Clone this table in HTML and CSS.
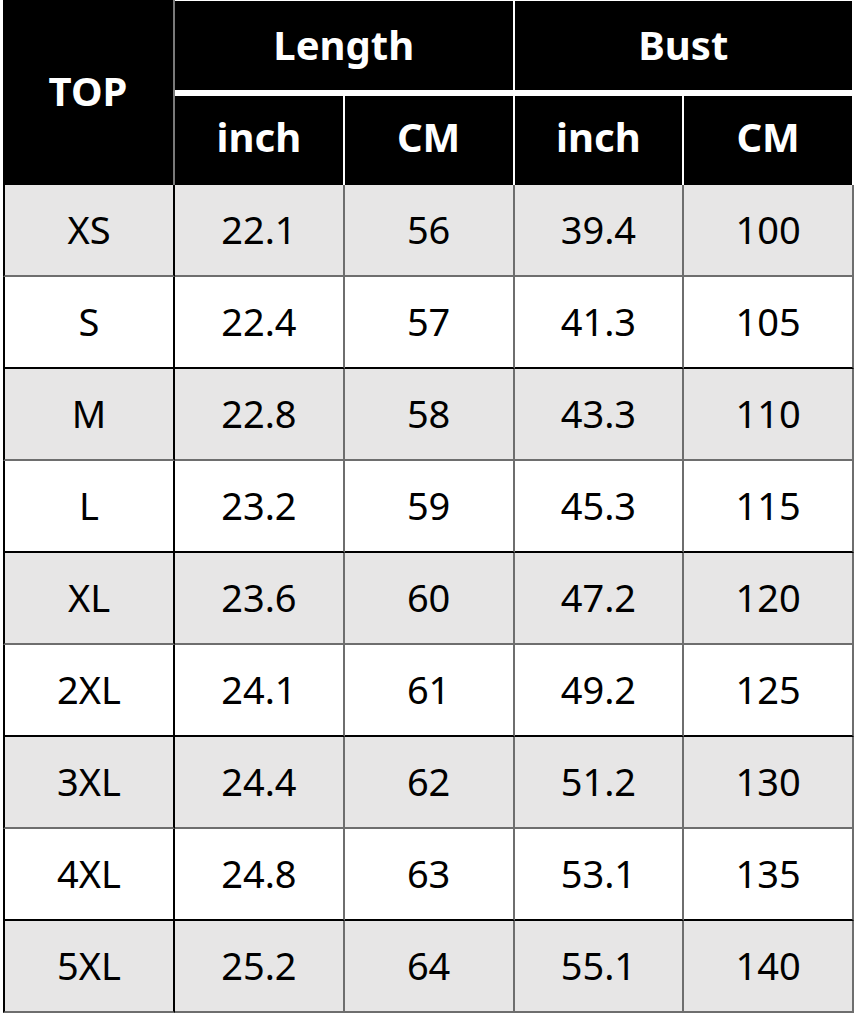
FILE: index.html
```html
<!DOCTYPE html>
<html lang="en">
<head>
<meta charset="utf-8">
<title>TOP size chart</title>
<link rel="stylesheet" href="styles.css">
</head>
<body>
<table class="chart">
  <colgroup>
    <col class="c"><col class="c"><col class="c"><col class="c"><col class="c">
  </colgroup>
  <thead>
    <tr class="h1">
      <th class="top" rowspan="2">TOP</th>
      <th class="grp" colspan="2">Length</th>
      <th class="grp last" colspan="2">Bust</th>
    </tr>
    <tr class="h2">
      <th class="sub">inch</th>
      <th class="sub">CM</th>
      <th class="sub">inch</th>
      <th class="sub last">CM</th>
    </tr>
  </thead>
  <tbody>
    <tr class="shade"><td class="size">XS</td><td>22.1</td><td>56</td><td>39.4</td><td>100</td></tr>
    <tr class="plain"><td class="size">S</td><td>22.4</td><td>57</td><td>41.3</td><td>105</td></tr>
    <tr class="shade"><td class="size">M</td><td>22.8</td><td>58</td><td>43.3</td><td>110</td></tr>
    <tr class="plain"><td class="size">L</td><td>23.2</td><td>59</td><td>45.3</td><td>115</td></tr>
    <tr class="shade"><td class="size">XL</td><td>23.6</td><td>60</td><td>47.2</td><td>120</td></tr>
    <tr class="plain"><td class="size">2XL</td><td>24.1</td><td>61</td><td>49.2</td><td>125</td></tr>
    <tr class="shade"><td class="size">3XL</td><td>24.4</td><td>62</td><td>51.2</td><td>130</td></tr>
    <tr class="plain"><td class="size">4XL</td><td>24.8</td><td>63</td><td>53.1</td><td>135</td></tr>
    <tr class="shade end"><td class="size">5XL</td><td>25.2</td><td>64</td><td>55.1</td><td>140</td></tr>
  </tbody>
</table>
</body>
</html>
```

FILE: styles.css
```css
html, body {
  margin: 0;
  padding: 0;
  background: #ffffff;
}

body {
  padding-left: 3px;
}

.chart {
  border-collapse: separate;
  border-spacing: 0;
  table-layout: fixed;
  width: 851px;
  font-family: "Noto Sans", "Open Sans", sans-serif;
  font-size: 38px;
  color: #000;
}

.chart th,
.chart td {
  padding: 0;
  text-align: center;
  vertical-align: middle;
  box-sizing: border-box;
}

.chart th {
  background: #000;
  color: #fff;
  font-weight: 700;
  font-size: 40px;
}

.top {
  width: 172px;
  height: 185px;
  border-right: 2px solid #7a7a7a;
  padding-bottom: 4px !important;
}

.grp {
  height: 96px;
  border-top: 1px solid #fff;
  border-right: 2px solid #fff;
  border-bottom: 6px solid #fff;
  padding-bottom: 2px !important;
}

.grp.last {
  border-right: 2px solid #fff;
}

.sub {
  height: 89px;
  border-right: 2px solid #fff;
  padding-bottom: 8px !important;
}

.sub.last {
  border-right: 2px solid #fff;
}

.chart td {
  height: 92px;
  border-right: 2px solid #6e6e6e;
  padding-bottom: 2px !important;
}

.chart td.size {
  border-left: 2px solid #000;
  border-right: 2px solid #000;
}

.shade td {
  background: #e7e6e6;
  border-bottom: 2px solid #6e6e6e;
}

.plain td {
  background: #fff;
  border-bottom: 2px solid #000;
}

.end td {
  border-bottom: 2px solid #6e6e6e;
}
```
